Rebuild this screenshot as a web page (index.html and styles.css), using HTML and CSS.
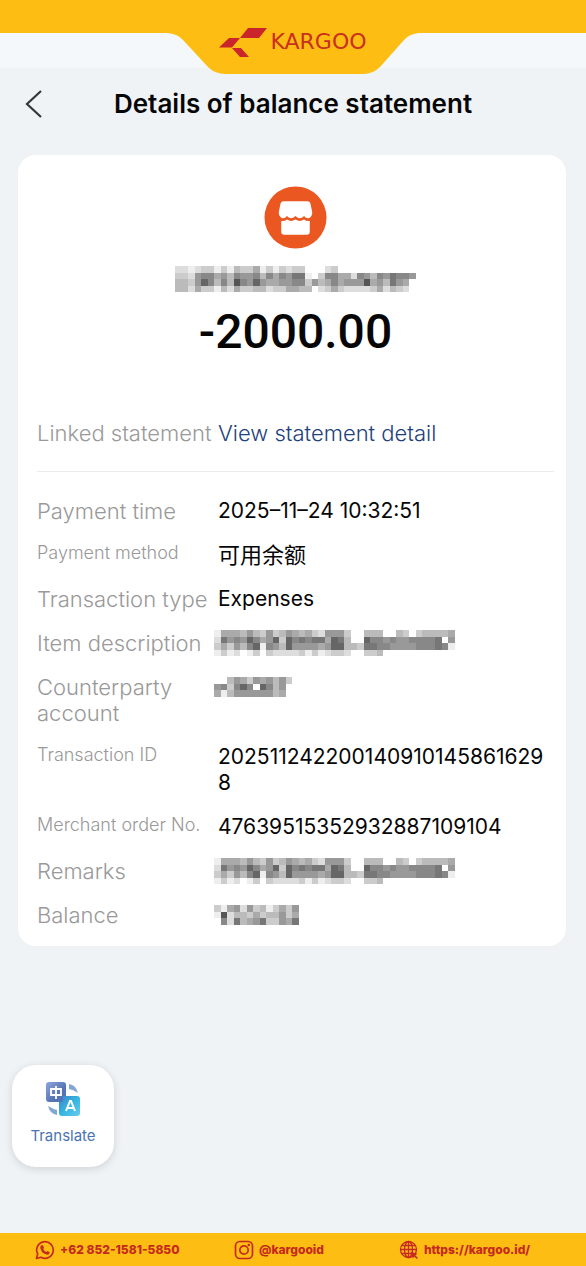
FILE: index.html
```html
<!DOCTYPE html>
<html lang="en">
<head>
<meta charset="utf-8">
<meta name="viewport" content="width=device-width, initial-scale=1">
<title>Details of balance statement</title>
<link rel="stylesheet" href="styles.css">
</head>
<body>
<header class="brand">
  <div class="brand-tab">
    <svg class="tab-shape" viewBox="0 0 256 41" aria-hidden="true"><path d="M0 0C8 0 13 2 18 7L43 34Q50 41 60 41H198Q208 41 215 34L239 7C244 2 249 0 256 0Z" fill="#fdbd13"/></svg>
    <div class="logo">
      <svg class="logo-mark" viewBox="0 0 48 29" aria-hidden="true"><path d="M29 0H48L40 10H21ZM10 10H21L13 19.500H0ZM13 20H22L30 29H21Z" fill="#c9252b"/></svg>
      <span class="logo-name">KARGOO</span>
    </div>
  </div>
</header>
<nav class="topbar">
  <button class="back" type="button" aria-label="Back"><svg viewBox="0 0 18 28" aria-hidden="true"><path d="M16 1L2 14L16 27" fill="none" stroke="#34373a" stroke-width="2.200"/></svg></button>
  <h1 class="title">Details of balance statement</h1>
</nav>
<main class="content">
  <section class="card">
    <div class="summary">
      <svg class="shop" viewBox="0 0 64 64" aria-hidden="true"><circle cx="32" cy="32" r="31.500" fill="#eb5721"/><path d="M20 15.500H44Q46.500 15.500 47.300 18L49 27Q49 31 46 32.500Q43 33.500 40.700 30.500Q36.500 35 32 30.500Q27.500 35 23.300 30.500Q21 33.500 18 32.500Q15 31 15 27L16.700 18Q17.500 15.500 20 15.500ZM17.500 35.500Q21 36 23.300 34Q27.500 37 32 34Q36.500 37 40.700 34Q43 36 46.500 35.500V46.500Q46.500 49.500 43.500 49.500H20.500Q17.500 49.500 17.500 46.500Z" fill="#fff"/></svg>
      <span class="mosaic" data-mosaic="name"></span>
      <p class="amount">-2000.00</p>
    </div>
    <dl class="details linked">
      <dt>Linked statement</dt><dd><a href="#statement">View statement detail</a></dd>
    </dl>
    <dl class="details">
      <dt>Payment time</dt><dd>2025–11–24 10:32:51</dd>
      <dt class="small">Payment method</dt><dd lang="zh">可用余额</dd>
      <dt>Transaction type</dt><dd>Expenses</dd>
      <dt>Item description</dt><dd><span class="mosaic" data-mosaic="item"></span></dd>
      <dt>Counterparty account</dt><dd><span class="mosaic" data-mosaic="account"></span></dd>
      <dt class="small">Transaction ID</dt><dd>2025112422001409101458616298</dd>
      <dt class="small">Merchant order No.</dt><dd>47639515352932887109104</dd>
      <dt>Remarks</dt><dd><span class="mosaic" data-mosaic="item"></span></dd>
      <dt>Balance</dt><dd><span class="mosaic" data-mosaic="balance"></span></dd>
    </dl>
  </section>
  <button class="translate" type="button">
    <svg viewBox="0 0 36 36" aria-hidden="true">
      <defs>
        <linearGradient id="g1" x1="0" y1="0" x2="1" y2="1"><stop offset="0" stop-color="#8ea5dc"/><stop offset=".6" stop-color="#5775b5"/><stop offset="1" stop-color="#4b75bd"/></linearGradient>
        <linearGradient id="g2" x1="0" y1="0" x2="1" y2="1"><stop offset="0" stop-color="#3d83ca"/><stop offset=".5" stop-color="#35b6e2"/><stop offset="1" stop-color="#67cdea"/></linearGradient>
      </defs>
      <path d="M4 1H18Q21 1 21 4V21H4Q1 21 1 18V4Q1 1 4 1Z" fill="url(#g1)"/>
      <path d="M18 15H32Q35 15 35 18V32Q35 35 32 35H17Q14 35 14 32V21H17Q18 20 18 15Z" fill="url(#g2)"/>
      <path d="M24 3Q31 4 33 12Q29 9 24 8ZM3 25Q8 28 12 29V34Q5 33 3 25Z" fill="#83a6d5"/>
      <path d="M6 8H16V14H6ZM11 5V18" fill="none" stroke="#fff" stroke-width="1.800"/>
      <path d="M21 30L25 20H26L30 30M22.500 27H28.500" fill="none" stroke="#fff" stroke-width="2"/>
    </svg>
    <span>Translate</span>
  </button>
</main>
<footer class="contacts">
  <a href="#phone"><svg viewBox="0 0 20 20" aria-hidden="true"><path d="M1.500 18.500L2.700 14A8.300 8.300 0 1 1 6 17.300Z" fill="none" stroke="#c6291e" stroke-width="1.700" stroke-linejoin="round"/><path d="M6 5.500Q7.500 4.300 8.300 6L9 7.700L8.200 9Q9 11 11.200 12L12.500 11L14.700 12.200Q14.500 14.800 12 14.700Q6.500 13.500 5.300 8Q5.200 6.500 6 5.500Z" fill="#c6291e"/></svg><span>+62 852-1581-5850</span></a>
  <a href="#instagram"><svg viewBox="0 0 20 20" aria-hidden="true"><g fill="none" stroke="#c6291e" stroke-width="1.700"><rect x="1.500" y="1.500" width="17" height="17" rx="4.500"/><circle cx="10" cy="10" r="4.200"/></g><circle cx="14.800" cy="5" r="1.200" fill="#c6291e"/></svg><span>@kargooid</span></a>
  <a href="#site"><svg viewBox="0 0 20 20" aria-hidden="true"><g fill="none" stroke="#c6291e" stroke-width="1.300"><circle cx="9.500" cy="9.500" r="8"/><ellipse cx="9.500" cy="9.500" rx="4" ry="8"/><path d="M1.500 9.500H17.500M2.500 5.500H16.500M2.500 13.500H13M9.500 1.500V17.500"/></g><path d="M11.500 11.500L18.500 14L16.300 15.300L19 18L17.800 19L15.200 16.500L14 18.500Z" fill="#c6291e"/></svg><span>https://kargoo.id/</span></a>
</footer>
<script src="mosaic.js"></script>
</body>
</html>
```
FILE: styles.css
```css
* { box-sizing: border-box; }
body {
  margin: 0;
  min-height: 100vh;
  display: flex;
  flex-direction: column;
  background: #eff3f6;
  color: #060606;
  font-family: Inter, "Noto Sans CJK SC", sans-serif;
}
svg { display: block; }
button { border: 0; padding: 0; font: inherit; cursor: pointer; }
a { color: inherit; text-decoration: none; }

.brand {
  display: flex;
  justify-content: center;
  padding-top: 33px;
  background: linear-gradient(#fdbd13 33px, #f5f8fb 33px, #f5f8fb 68px, #eff3f6 68px);
}
.brand-tab { display: grid; width: 256px; }
.tab-shape, .logo { grid-area: 1 / 1; }
.tab-shape { width: 256px; height: 41px; }
.logo { display: flex; align-self: start; justify-content: center; gap: 3px; height: 18px; align-items: center; }
.logo-mark { width: 48px; height: 29px; }
.logo-name { color: #c9301f; font: 400 22px/22px "DejaVu Sans", sans-serif; }

.topbar {
  display: grid;
  grid-template-columns: 40px 1fr 40px;
  align-items: center;
  height: 60px;
  padding: 0 20px;
}
.back { display: flex; padding: 0 5px; background: none; }
.back svg { width: 18px; height: 28px; }
.title { margin: 0; font-size: 26px; line-height: 32px; font-weight: 600; text-align: center; }

.content { flex: 1; padding: 21px 20px 20px 18px; }
.card { padding: 31px 12px 18px 19px; border-radius: 18px; background: #fff; }
.summary { display: flex; flex-direction: column; align-items: center; }
.shop { width: 63px; height: 63px; margin-bottom: 17px; }
.amount { margin: 10px 0 0; font: 500 48px/60px Roboto, sans-serif; }

.details {
  display: grid;
  grid-template-columns: 181px 1fr;
  row-gap: 18px;
  margin: 0;
  font-size: 22px;
  line-height: 26px;
}
.details dt { color: #999; font-weight: 300; }
.details dd { margin: 0; font-size: 21px; overflow-wrap: anywhere; }
.details dd:lang(zh) { font-size: 22px; }
.details .small { font-size: 18px; line-height: 22px; }
.details .mosaic { margin-left: -4px; }
.linked { margin: 58px 0 26px; padding-bottom: 24px; border-bottom: 1px solid #ececec; }
.linked a { color: #1e417c; font-size: 22px; font-weight: 300; }
.mosaic { display: flex; align-items: center; height: 26px; }

.translate {
  display: flex;
  flex-direction: column;
  align-items: center;
  gap: 10px;
  width: 102px;
  height: 102px;
  margin: 119px 0 0 -6px;
  padding-top: 16px;
  border-radius: 24px;
  background: #fff;
  box-shadow: 0 2px 8px #0002;
  color: #4a74b0;
  font-size: 15px;
  line-height: 18px;
}
.translate svg { width: 36px; height: 36px; }

.contacts {
  display: grid;
  grid-template-columns: 199fr 165fr 139fr;
  align-items: center;
  height: 33px;
  padding: 0 48px 0 35px;
  background: #fdbd13;
  color: #c6291e;
  font-size: 12px;
  font-weight: 800;
}
.contacts a { display: flex; align-items: center; gap: 5px; white-space: nowrap; }
.contacts svg { width: 20px; height: 20px; }
```
FILE: mosaic.js
```js
// Each hex digit is the grey level of one cell; a dot leaves the cell empty.
const patterns = {
  name: [
    "ddedccecebccaececdcc...dc....f.f....",
    "ccd988a9b8998b8a8977e.c88aad89b897889",
    "bbc968b8b58969aa9988c9ba8a9995a9b79a.",
    "bbdaccebdaccbbdccaabb.dcacddddcadbcd."
  ],
  item: [
    "eaaab9bc9cb9abacd999c..bbb..bc.cbbbba",
    "d798968a96c687877a67b..688989988887.9",
    "cac9b86e89b69999a966bbc7788999988878e",
    "ecedfecfcddddcecedccd..ccb..........."
  ],
  account: ["..b9ac9a9b9c", "98c868.68b9.", "aeb999999ba."],
  balance: ["cea9d9cbecac9f", "e5dbbcacbb9caf", "f8d7ba97cc9a7f"]
};
const cell = 6.5;
document.querySelectorAll("[data-mosaic]").forEach((host) => {
  const rows = patterns[host.dataset.mosaic];
  const width = Math.max(...rows.map((row) => row.length)) * cell;
  const height = rows.length * cell;
  const rects = rows.map((row, y) => [...row].map((c, x) =>
    c === "." ? "" : `<rect x="${x * cell}" y="${y * cell}" width="${cell}" height="${cell}" fill="#${c.repeat(3)}"/>`
  ).join("")).join("");
  host.innerHTML = `<svg width="${width}" height="${height}" viewBox="0 0 ${width} ${height}" shape-rendering="crispEdges" aria-hidden="true">${rects}</svg>`;
});
```
